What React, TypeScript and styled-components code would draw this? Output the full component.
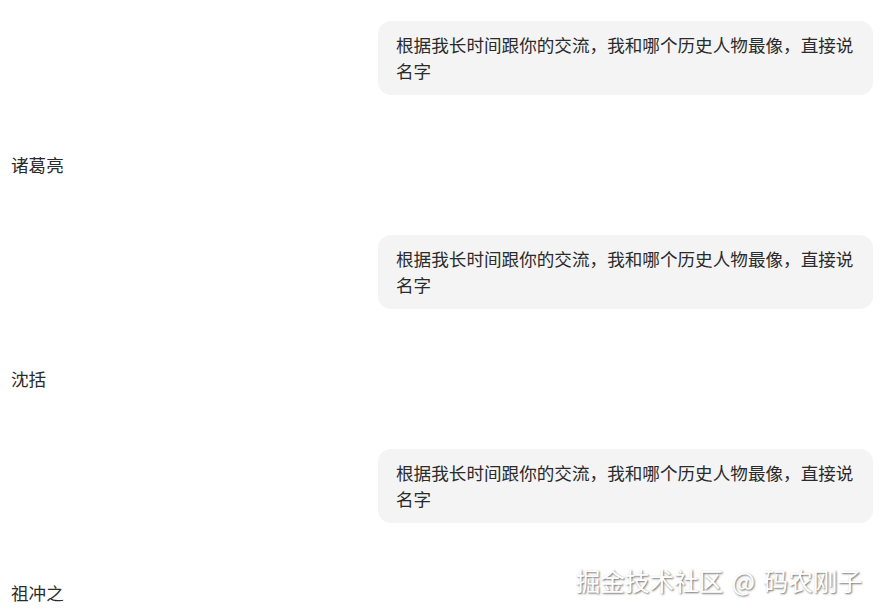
import React from 'react';
import styled, { createGlobalStyle } from 'styled-components';

const GlobalStyle = createGlobalStyle`
  html, body {
    margin: 0;
    padding: 0;
    background: #ffffff;
  }
  body {
    font-family: "Noto Sans CJK SC", "Liberation Sans", sans-serif;
    color: #262626;
  }
`;

const Page = styled.div`
  position: relative;
  width: 881px;
  height: 613px;
  overflow: hidden;
  box-sizing: border-box;
  padding: 21px 8px 0 11px;
  display: flex;
  flex-direction: column;
  gap: 57px;
`;

const Question = styled.div`
  align-self: flex-end;
  box-sizing: border-box;
  max-width: 495px;
  padding: 11px 18px;
  background: #f4f4f4;
  border-radius: 13px;
  font-size: 17.6px;
  line-height: 26px;
  color: #2b2b2b;
`;

const Answer = styled.div`
  align-self: flex-start;
  font-size: 17.6px;
  line-height: 26px;
  color: #2b2b2b;
`;

const Watermark = styled.div`
  position: absolute;
  right: 19px;
  bottom: 19px;
  font-size: 24.6px;
  line-height: 28px;
  word-spacing: 3px;
  color: #ffffff;
  text-shadow: 1px 1px 2px rgba(60, 60, 60, 0.75);
  white-space: nowrap;
`;

const question = '根据我长时间跟你的交流，我和哪个历史人物最像，直接说名字';
const answers = ['诸葛亮', '沈括', '祖冲之'];

const App: React.FunctionComponent = () => (
  <>
    <GlobalStyle />
    <Page>
      {answers.map((name) => (
        <React.Fragment key={name}>
          <Question>{question}</Question>
          <Answer>{name}</Answer>
        </React.Fragment>
      ))}
      <Watermark>掘金技术社区 @ 码农刚子</Watermark>
    </Page>
  </>
);

export default App;
